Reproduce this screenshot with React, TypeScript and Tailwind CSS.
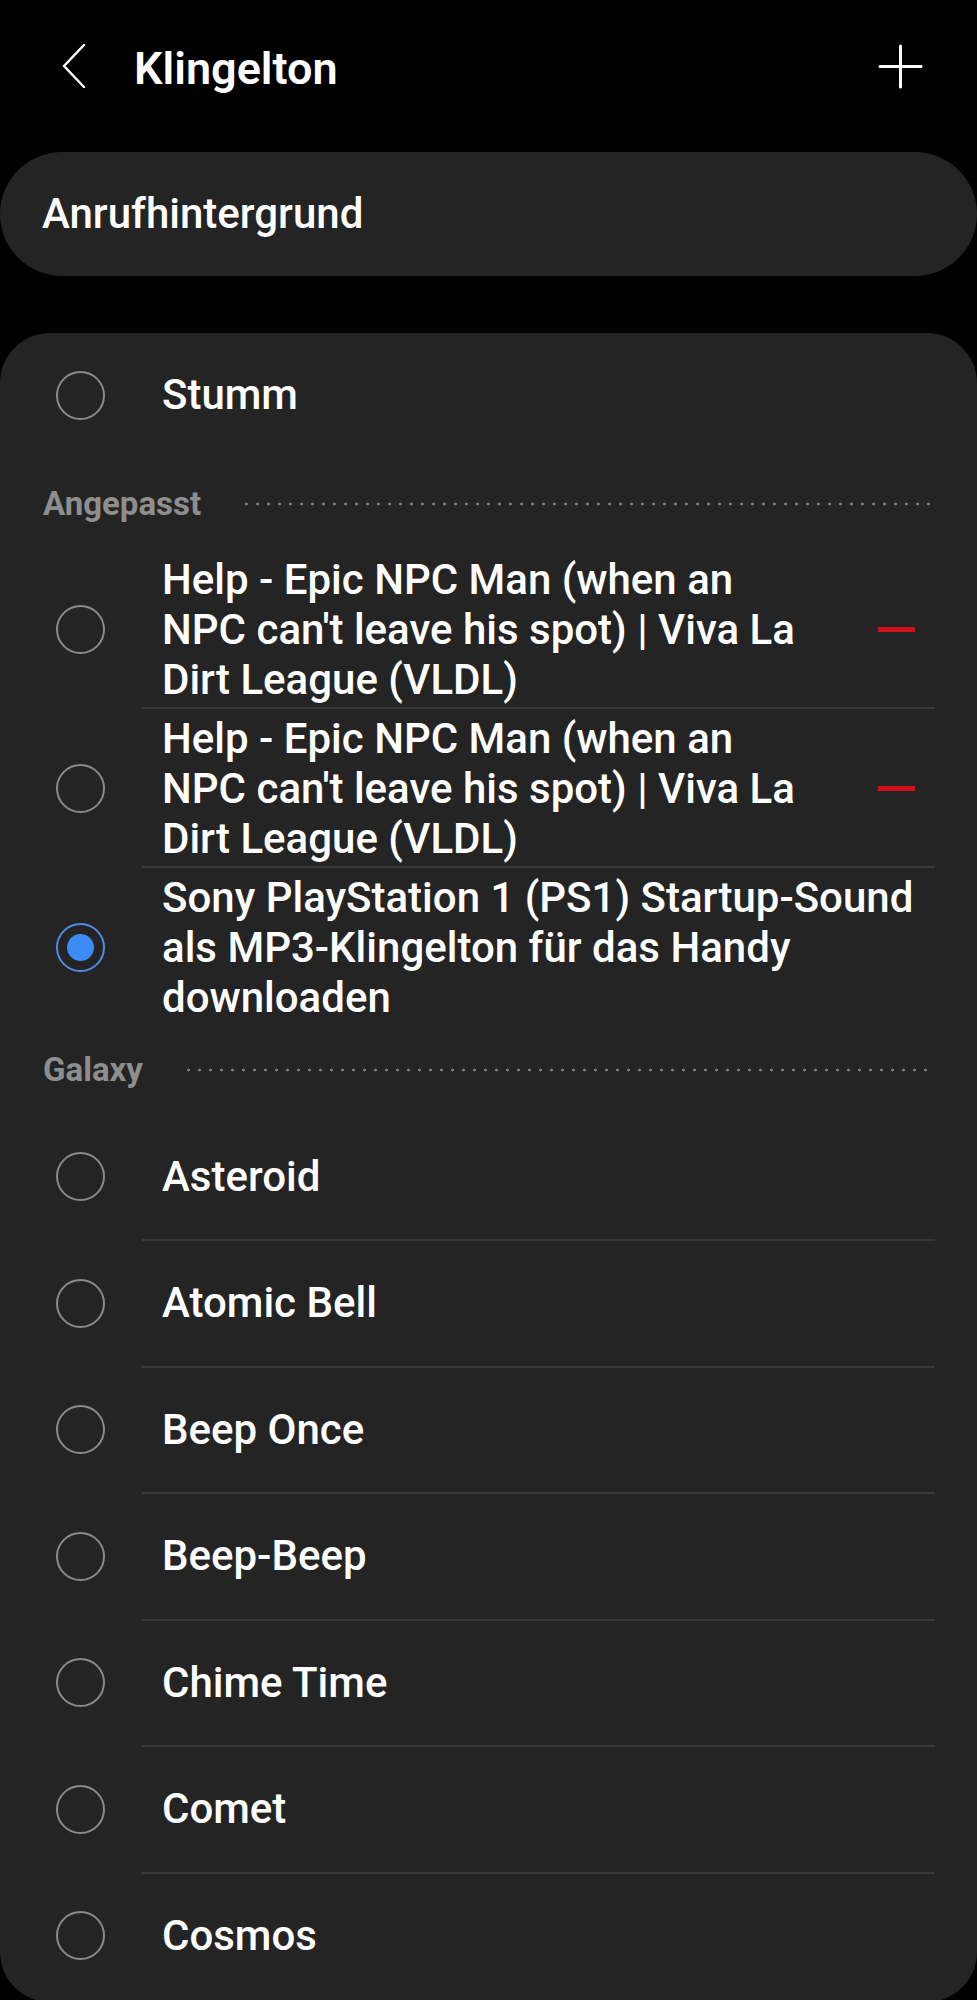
type Tone = {
  label: string
  checked?: boolean
  removable?: boolean
  multi?: boolean
  divider?: boolean
}

const custom: Tone[] = [
  { label: "Help - Epic NPC Man (when an NPC can't leave his spot) | Viva La Dirt League (VLDL)", removable: true, multi: true, divider: true },
  { label: "Help - Epic NPC Man (when an NPC can't leave his spot) | Viva La Dirt League (VLDL)", removable: true, multi: true, divider: true },
  { label: 'Sony PlayStation 1 (PS1) Startup-Sound als MP3-Klingelton für das Handy downloaden', checked: true, multi: true },
]

const galaxy = ['Asteroid', 'Atomic Bell', 'Beep Once', 'Beep-Beep', 'Chime Time', 'Comet', 'Cosmos']

function Radio({ checked }: { checked?: boolean }) {
  if (checked) {
    return (
      <div className="w-[49px] h-[49px] shrink-0 rounded-full border-[2.5px] border-[#4f8be6] flex items-center justify-center">
        <div className="w-[27px] h-[27px] rounded-full bg-[#3d8bf7]" />
      </div>
    )
  }
  return <div className="w-[49px] h-[49px] shrink-0 rounded-full border-2 border-[#8a8a8a]" />
}

function Divider() {
  return <div className="ml-[142px] mr-[42px] h-[2px] bg-[#393939]" />
}

function SectionHeader({ title, tall }: { title: string; tall?: boolean }) {
  return (
    <div className={`flex items-center pl-[43px] pr-[45px] ${tall ? 'h-[92px]' : 'h-[90px]'}`}>
      <span className="text-[33px] leading-none font-bold text-[#8e8e8e]">{title}</span>
      <div className="flex-1 ml-[40px] h-[4px] bg-[radial-gradient(circle,#7c7c7c_1.2px,transparent_1.7px)] bg-[length:11px_4px]" />
    </div>
  )
}

function ToneRow({ label, checked, removable, multi }: Tone) {
  return (
    <div className={`flex items-center pl-[56px] pr-[62px] ${multi ? 'pt-[5px] pb-[2px]' : 'h-[124.5px]'}`}>
      <Radio checked={checked} />
      <div className={`ml-[57px] text-[42px] leading-[50px] font-medium text-white ${removable ? 'w-[655px]' : 'flex-1'}`}>
        {label}
      </div>
      {removable && <div className="ml-auto w-[37px] h-[5px] bg-[#d0111b]" />}
    </div>
  )
}

export default function App() {
  return (
    <div className="min-h-[2000px] bg-black text-white [font-family:Roboto,'Liberation_Sans',sans-serif]">
      <div className="h-[132px] flex items-center">
        <svg className="ml-[62px]" width="24" height="44" viewBox="0 0 24 44">
          <polyline points="22,1 2,22 22,43" fill="none" stroke="white" strokeWidth="2.5" strokeLinecap="round" strokeLinejoin="round" />
        </svg>
        <h1 className="ml-[48px] mt-[5px] text-[45px] leading-none font-semibold">Klingelton</h1>
        <svg className="ml-auto mr-[54px]" width="45" height="45" viewBox="0 0 45 45">
          <path d="M22.5 2v41M2 22.5h41" stroke="white" strokeWidth="3" strokeLinecap="round" />
        </svg>
      </div>

      <div className="mt-[20px] h-[124px] rounded-[62px] bg-[#242424] flex items-center pl-[42px]">
        <span className="text-[42px] leading-none font-medium">Anrufhintergrund</span>
      </div>

      <div className="mt-[57px] rounded-[50px] bg-[#242424] pb-[4px]">
        <ToneRow label="Stumm" />
        <SectionHeader title="Angepasst" tall />
        {custom.map((t, i) => (
          <div key={i}>
            <ToneRow {...t} />
            {t.divider && <Divider />}
          </div>
        ))}
        <SectionHeader title="Galaxy" />
        {galaxy.map((name, i) => (
          <div key={name}>
            <ToneRow label={name} />
            {i < galaxy.length - 1 && <Divider />}
          </div>
        ))}
      </div>
    </div>
  )
}
